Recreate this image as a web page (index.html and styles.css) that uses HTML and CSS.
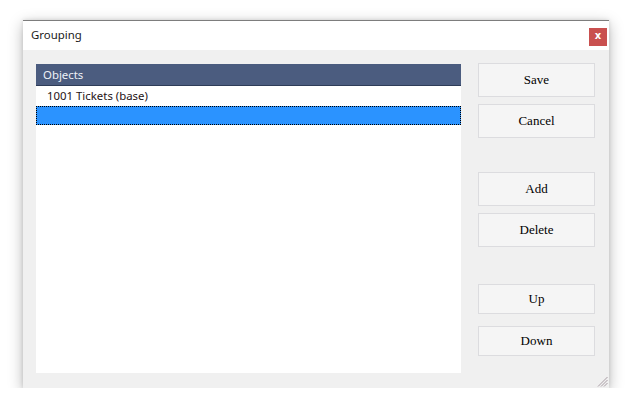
FILE: index.html
```html
<!DOCTYPE html>
<html>
<head>
<meta charset="utf-8">
<link rel="stylesheet" href="styles.css">
</head>
<body>
<div class="window">
  <div class="titlebar">
    <span class="title">Grouping</span>
    <span class="close">x</span>
  </div>
  <div class="content">
    <div class="list">
      <div class="list-header">Objects</div>
      <div class="row">1001 Tickets (base)</div>
      <div class="row selected"></div>
    </div>
    <div class="buttons">
      <button class="btn">Save</button>
      <button class="btn gap-s">Cancel</button>
      <button class="btn gap-l">Add</button>
      <button class="btn gap-s">Delete</button>
      <button class="btn short gap-xl">Up</button>
      <button class="btn short gap-m">Down</button>
    </div>
    <svg class="grip" width="12" height="12" viewBox="0 0 12 12">
      <g stroke="#a89ca4" stroke-width="1">
        <line x1="11.5" y1="2" x2="2" y2="11.5"/>
        <line x1="11.5" y1="5" x2="5" y2="11.5"/>
        <line x1="11.5" y1="8" x2="8" y2="11.5"/>
      </g>
    </svg>
  </div>
</div>
</body>
</html>
```
FILE: styles.css
```css
html, body {
  margin: 0;
  padding: 0;
  background: #ffffff;
}
body {
  padding: 20px 0 0 23px;
}
.window {
  position: relative;
  width: 586px;
  height: 368px;
  box-sizing: border-box;
  border-top: 1px solid #7d7d7d;
  background: #f0f0f0;
  box-shadow: 0 4px 14px rgba(0,0,0,0.28), 0 0 4px rgba(0,0,0,0.12);
  display: flex;
  flex-direction: column;
}
.titlebar {
  height: 29px;
  background: #ffffff;
  display: flex;
  align-items: flex-start;
  justify-content: space-between;
  padding: 0 2px 0 8px;
}
.title {
  font-family: "Noto Sans", "Open Sans", sans-serif;
  font-size: 11.4px;
  color: #1a1a1a;
  margin-top: 6px;
}
.close {
  margin-top: 7px;
  width: 18px;
  height: 18px;
  background: #c9504f;
  color: #ffffff;
  font-family: "DejaVu Sans", sans-serif;
  font-weight: bold;
  font-size: 10px;
  line-height: 16px;
  text-align: center;
}
.content {
  flex: 1;
  position: relative;
  display: flex;
  align-items: flex-start;
  padding: 13px 14px 0 13px;
}
.list {
  width: 425px;
  height: 309px;
  margin-top: 1px;
  background: #ffffff;
  display: flex;
  flex-direction: column;
}
.list-header {
  height: 22px;
  box-sizing: border-box;
  background: #4b5c7f;
  border-bottom: 1px solid #2e3c58;
  color: #eef1f7;
  font-family: "Noto Sans", "Open Sans", sans-serif;
  font-size: 11.4px;
  line-height: 22px;
  padding-left: 7px;
}
.row {
  height: 20px;
  font-family: "Noto Sans", "Open Sans", sans-serif;
  font-size: 11.4px;
  line-height: 20px;
  color: #1e1214;
  padding-left: 11px;
}
.row.selected {
  height: 19px;
  box-sizing: border-box;
  background: #2b93ff;
  border: 1px dotted #000000;
}
.buttons {
  margin-left: 17px;
  display: flex;
  flex-direction: column;
}
.btn {
  width: 117px;
  height: 34px;
  box-sizing: border-box;
  background: #f5f5f5;
  border: 1px solid #dcdcdf;
  font-family: "Liberation Serif", "Times New Roman", serif;
  font-size: 13px;
  color: #000000;
  padding: 0;
  margin: 0;
}
.btn.short {
  height: 30px;
}
.gap-s { margin-top: 7px; }
.gap-l { margin-top: 34px; }
.gap-xl { margin-top: 37px; }
.gap-m { margin-top: 12px; }
.grip {
  position: absolute;
  right: 1px;
  bottom: 1px;
}
```
